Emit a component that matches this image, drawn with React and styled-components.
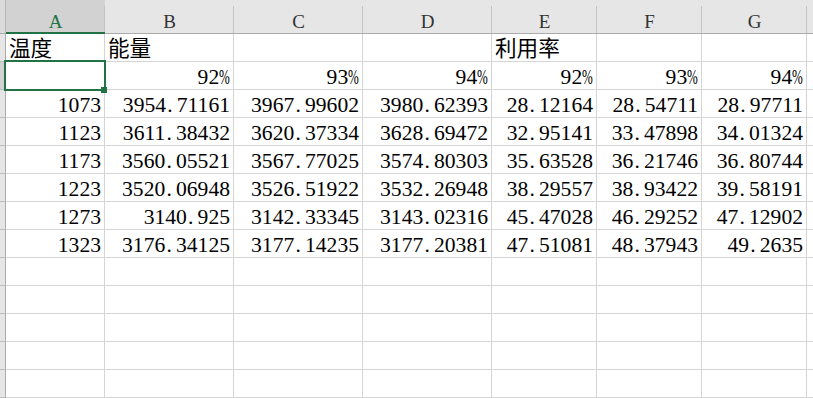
import React from "react";
import styled, { createGlobalStyle } from "styled-components";

const GlobalStyle = createGlobalStyle`
  html, body {
    margin: 0;
    padding: 0;
    background: #ffffff;
    overflow: hidden;
  }
`;

// the last column is only partly in view, so its letter stays out of sight
const COLUMNS = ["A", "B", "C", "D", "E", "F", "G", ""];
const ACTIVE_COL = 0;
const ACTIVE_ROW = 1;
const ROW_COUNT = 13;

// cell values, row by row; "" is an empty cell, {t, left} is left-aligned text
const DATA = [
  [{ t: "温度", left: true }, { t: "能量", left: true }, "", "", { t: "利用率", left: true }, "", "", ""],
  ["", "92%", "93%", "94%", "92%", "93%", "94%", ""],
  ["1073", "3954.71161", "3967.99602", "3980.62393", "28.12164", "28.54711", "28.97711", ""],
  ["1123", "3611.38432", "3620.37334", "3628.69472", "32.95141", "33.47898", "34.01324", ""],
  ["1173", "3560.05521", "3567.77025", "3574.80303", "35.63528", "36.21746", "36.80744", ""],
  ["1223", "3520.06948", "3526.51922", "3532.26948", "38.29557", "38.93422", "39.58191", ""],
  ["1273", "3140.925", "3142.33345", "3143.02316", "45.47028", "46.29252", "47.12902", ""],
  ["1323", "3176.34125", "3177.14235", "3177.20381", "47.51081", "48.37943", "49.2635", ""],
];

const Sheet = styled.div`
  display: grid;
  grid-template-columns: 6px 99px 129px 129px 129px 105px 105px 105px 120px;
  grid-template-rows: 34px;
  grid-auto-rows: 28px;
  width: 813px;
  height: 398px;
  overflow: hidden;
  font-family: "Liberation Serif", "Noto Sans CJK SC", serif;
`;

const Corner = styled.div`
  box-sizing: border-box;
  background: #dadada;
  border-right: 1px solid #b9b9b9;
  border-bottom: 1px solid #ababab;
`;

const ColHead = styled.div`
  box-sizing: border-box;
  background:
    linear-gradient(#c4c4c4, #c4c4c4) right bottom / 1px calc(100% - 6px) no-repeat,
    ${(p) => (p.$active ? "#d2d2d2" : "#e6e6e6")};
  border-bottom: ${(p) => (p.$active ? "2px solid #217346" : "1px solid #ababab")};
  color: ${(p) => (p.$active ? "#217346" : "#333333")};
  font-size: 19px;
  line-height: 21px;
  padding-top: 11px;
  text-align: center;
`;

const RowHead = styled.div`
  box-sizing: border-box;
  background: ${(p) => (p.$active ? "#d2d2d2" : "#e6e6e6")};
  border-right: 1px solid #ababab;
  border-bottom: 1px solid #bcbcbc;
`;

const Cell = styled.div`
  box-sizing: border-box;
  position: relative;
  border-right: 1px solid #d4d4d4;
  border-bottom: 1px solid #d4d4d4;
  padding: 3px 3px 0 3px;
  font-size: 21.6px;
  line-height: 24px;
  color: #000000;
  white-space: nowrap;
  text-align: ${(p) => (p.$left ? "left" : "right")};
`;

const Selection = styled.div`
  position: absolute;
  inset: -2px;
  border: 2px solid #217346;
  z-index: 2;
  pointer-events: none;
`;

const FillHandle = styled.span`
  position: absolute;
  right: -3px;
  bottom: -4px;
  width: 6px;
  height: 6px;
  background: #217346;
`;

// half-width period and percent sign, as a CJK system font sets them
const Dot = styled.span`
  display: inline-block;
  width: 0.5em;
  text-align: left;
  padding-left: 0.06em;
  box-sizing: border-box;
`;

const Pct = styled.span`
  display: inline-block;
  width: 0.5em;
  text-align: left;
  transform: scaleX(0.6);
  transform-origin: left center;
`;

function Value({ v }) {
  if (v.endsWith("%")) {
    return (
      <>
        {v.slice(0, -1)}
        <Pct>%</Pct>
      </>
    );
  }
  const [int, frac] = v.split(".");
  if (frac === undefined) return v;
  return (
    <>
      {int}
      <Dot>.</Dot>
      {frac}
    </>
  );
}

export default function App() {
  const rows = [];
  for (let r = 0; r < ROW_COUNT; r++) {
    const data = DATA[r] || COLUMNS.map(() => "");
    rows.push(<RowHead key={`rh${r}`} $active={r === ACTIVE_ROW} />);
    data.forEach((cell, c) => {
      const isObj = typeof cell === "object";
      const text = isObj ? cell.t : cell;
      const selected = r === ACTIVE_ROW && c === ACTIVE_COL;
      rows.push(
        <Cell key={`c${r}-${c}`} $left={isObj && cell.left}>
          {isObj ? text : text && <Value v={text} />}
          {selected && (
            <Selection>
              <FillHandle />
            </Selection>
          )}
        </Cell>
      );
    });
  }

  return (
    <>
      <GlobalStyle />
      <Sheet>
        <Corner />
        {COLUMNS.map((col, i) => (
          <ColHead key={`h${i}`} $active={i === ACTIVE_COL}>
            {col}
          </ColHead>
        ))}
        {rows}
      </Sheet>
    </>
  );
}
